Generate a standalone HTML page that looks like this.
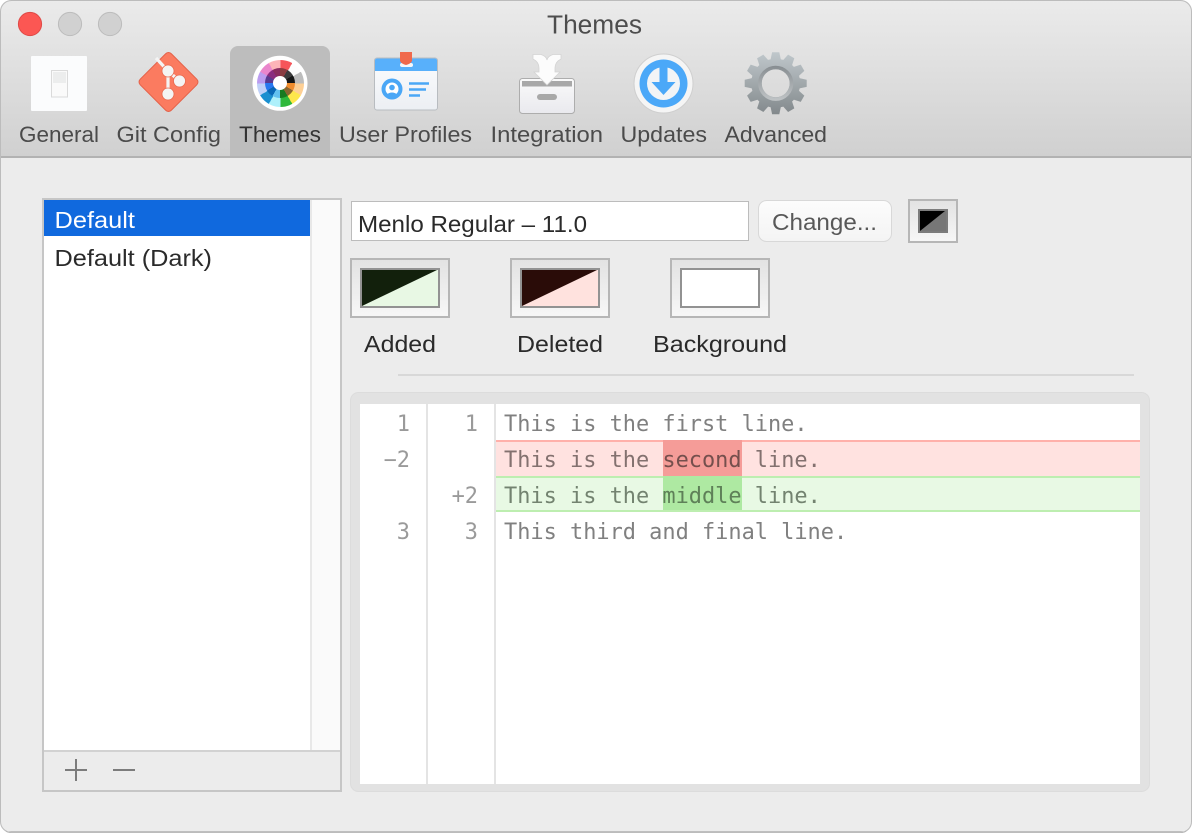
<!DOCTYPE html>
<html>
<head>
<meta charset="utf-8">
<title>Themes</title>
<style>
html,body{margin:0;padding:0;background:#fff;width:1192px;height:834px;overflow:hidden}
svg{position:absolute;left:0;top:0;display:block}
text{font-family:"Liberation Sans",sans-serif;white-space:pre}
.tb{font-size:22.5px;fill:#4b4b4b}
.ui{font-size:23.5px;fill:#2a2a2a}
.m{font-family:"DejaVu Sans Mono","Liberation Mono",monospace;font-size:21.93px;fill:#808080}
.n{font-family:"DejaVu Sans Mono","Liberation Mono",monospace;font-size:21.93px;fill:#9a9a9a;text-anchor:end}
#wheel{position:absolute;left:256.5px;top:59.8px;width:47px;height:47px;border-radius:50%;filter:blur(.35px);
background:conic-gradient(#f5555a 0 30deg,#fdfdfd 30deg 60deg,#bcbcbc 60deg 90deg,#fdcf94 90deg 120deg,#fde74c 120deg 150deg,#2fb83c 150deg 180deg,#aef0fb 180deg 210deg,#1b8fd0 210deg 240deg,#bfd0f8 240deg 270deg,#bb9cf0 270deg 300deg,#ea86cc 300deg 330deg,#fdb4b8 330deg 360deg)}
#wheel2{position:absolute;left:265px;top:68.3px;width:30px;height:30px;border-radius:50%;filter:blur(.35px);
background:conic-gradient(#8a3c40 0 30deg,#3b3b3b 30deg 60deg,#161616 60deg 90deg,#f08c2c 90deg 120deg,#8a6630 120deg 150deg,#177a20 150deg 180deg,#62c0f0 180deg 210deg,#0a68b8 210deg 240deg,#2878f0 240deg 270deg,#5a3a90 270deg 300deg,#8a2c80 300deg 330deg,#8a2c60 330deg 360deg)}
#wheel3{position:absolute;left:273px;top:76.3px;width:14px;height:14px;border-radius:50%;background:#fff}
</style>
</head>
<body>
<svg width="1192" height="834" viewBox="0 0 1192 834" xmlns="http://www.w3.org/2000/svg">
<defs>
<linearGradient id="tg" x1="0" y1="0" x2="0" y2="1"><stop offset="0" stop-color="#ebebeb"/><stop offset="1" stop-color="#d0d0d0"/></linearGradient>
<linearGradient id="sw" x1="0" y1="0" x2="0" y2="1"><stop offset="0" stop-color="#e2e2e2"/><stop offset="1" stop-color="#f7f7f7"/></linearGradient>
<linearGradient id="btn" x1="0" y1="0" x2="0" y2="1"><stop offset="0" stop-color="#fcfcfc"/><stop offset="1" stop-color="#f4f4f4"/></linearGradient>
<linearGradient id="gear" gradientUnits="userSpaceOnUse" x1="0" y1="52" x2="0" y2="115"><stop offset="0" stop-color="#c0c8cc"/><stop offset="1" stop-color="#82888b"/></linearGradient>
<linearGradient id="gear2" gradientUnits="userSpaceOnUse" x1="0" y1="65" x2="0" y2="102"><stop offset="0" stop-color="#868c90"/><stop offset="1" stop-color="#c2c6c8"/></linearGradient>
<linearGradient id="box" x1="0" y1="0" x2="0" y2="1"><stop offset="0" stop-color="#fafafa"/><stop offset="1" stop-color="#e9e9ee"/></linearGradient>
<linearGradient id="card" x1="0" y1="0" x2="0" y2="1"><stop offset="0" stop-color="#fbfcfe"/><stop offset="1" stop-color="#eceff3"/></linearGradient>
<clipPath id="win"><rect x="0" y="0" width="1192" height="833" rx="11"/></clipPath>
<mask id="gm" maskUnits="userSpaceOnUse" x="735" y="45" width="85" height="80">
  <g transform="translate(775.700 83.300)" fill="#fff">
    <path id="t0" d="M-5.500 -22 L-3.600 -31 H3.600 L5.500 -22 V22 L3.600 31 H-3.600 L-5.500 22 Z"/>
    <path transform="rotate(30)" d="M-5.500 -22 L-3.600 -31 H3.600 L5.500 -22 V22 L3.600 31 H-3.600 L-5.500 22 Z"/>
    <path transform="rotate(60)" d="M-5.500 -22 L-3.600 -31 H3.600 L5.500 -22 V22 L3.600 31 H-3.600 L-5.500 22 Z"/>
    <path transform="rotate(90)" d="M-5.500 -22 L-3.600 -31 H3.600 L5.500 -22 V22 L3.600 31 H-3.600 L-5.500 22 Z"/>
    <path transform="rotate(120)" d="M-5.500 -22 L-3.600 -31 H3.600 L5.500 -22 V22 L3.600 31 H-3.600 L-5.500 22 Z"/>
    <path transform="rotate(150)" d="M-5.500 -22 L-3.600 -31 H3.600 L5.500 -22 V22 L3.600 31 H-3.600 L-5.500 22 Z"/>
    <circle r="24.500"/>
    <circle r="14" fill="#000"/>
  </g>
</mask>
</defs>

<g clip-path="url(#win)">
<rect width="1192" height="834" fill="#ececec"/>
<rect width="1192" height="157" fill="url(#tg)"/>
<rect x="230" y="46" width="100" height="112" rx="8" fill="#bdbdbd"/>
<rect x="230" y="60" width="100" height="98" fill="#bdbdbd"/>
<rect y="156" width="1192" height="2" fill="#b2b2b2"/>
<rect y="831.500" width="1192" height="2" fill="#929292"/>
</g>
<rect x="0.500" y="0.500" width="1191" height="832" rx="11" fill="none" stroke="#bcbcbc"/>

<!-- traffic lights -->
<circle cx="30" cy="24" r="11.600" fill="#fc5753" stroke="#df4a47"/>
<circle cx="70" cy="24" r="11.600" fill="#d1d1d1" stroke="#bcbcbc"/>
<circle cx="110" cy="24" r="11.600" fill="#d1d1d1" stroke="#bcbcbc"/>

<text x="547" y="33.500" font-size="25.500" fill="#4d4d4d" textLength="95" lengthAdjust="spacingAndGlyphs">Themes</text>

<!-- General -->
<rect x="31" y="56" width="56" height="55" rx="1" fill="#fbfcfd"/>
<rect x="51.500" y="70.500" width="16" height="26.500" fill="#fafafa" stroke="#dadada"/>
<rect x="53" y="72" width="13" height="11" fill="#eceded"/>

<!-- Git -->
<rect x="146.500" y="60" width="44" height="44" rx="4" transform="rotate(45 168.500 82)" fill="#fb7b60" stroke="#e4624a"/>
<path d="M156 58 L168 71 M168 71 V94 M168 71 L179.500 81" stroke="#f4f4f4" stroke-width="3.200" fill="none"/>
<circle cx="168" cy="71" r="6" fill="#f4f4f4" stroke="#e8684e" stroke-width=".8"/>
<circle cx="179.500" cy="81" r="6" fill="#f4f4f4" stroke="#e8684e" stroke-width=".8"/>
<circle cx="168" cy="94" r="6" fill="#f4f4f4" stroke="#e8684e" stroke-width=".8"/>

<!-- Themes wheel base -->
<circle cx="280" cy="83.300" r="27.500" fill="#fff"/>

<!-- User Profiles -->
<rect x="374.500" y="58" width="63" height="52" rx="2.500" fill="url(#card)" stroke="#b8bcc0" stroke-width="1"/>
<path d="M375 71 V60.500 a2 2 0 0 1 2-2 h58 a2 2 0 0 1 2 2 V71 Z" fill="#58b0fb"/>
<rect x="400" y="63" width="13" height="4" rx="2" fill="#f4f8fc"/>
<path d="M400 52 h12 v9 q-1.500 3 -6 4 q-4.500 -1 -6 -4 Z" fill="#f0694c"/>
<circle cx="392" cy="89" r="10.500" fill="#4aa7f6"/>
<circle cx="392" cy="89" r="6.500" fill="#fff"/>
<circle cx="392" cy="87.500" r="2.800" fill="#4aa7f6"/>
<path d="M386 95 q6-5 12 0 l-2 2 h-8 Z" fill="#4aa7f6"/>
<path d="M409 83.500 h20 M409 89.500 h17 M409 95.500 h11" stroke="#4aa7f6" stroke-width="2.500" fill="none"/>

<!-- Integration -->
<rect x="519.500" y="78.500" width="55" height="35" rx="3" fill="url(#box)" stroke="#adadad"/>
<rect x="522" y="81" width="50" height="5.500" fill="#a8a8a8"/>
<rect x="537" y="94" width="20" height="6" rx="3" fill="#a8a8a8"/>
<path d="M533 54.500 H541 Q546 56 547 60 Q548 56 553 54.500 H561 V59 Q555 62 555 68 V72 H560 L547 85 L534 72 H539 V68 Q539 62 533 59 Z" fill="#fcfcfc" stroke="#d4d4d4" stroke-width="0.800"/>

<!-- Updates -->
<circle cx="663.500" cy="83.500" r="29.500" fill="#f5f5f5" stroke="#cfcfcf" stroke-width="1"/>
<circle cx="663.500" cy="83.500" r="24" fill="#4ba8f8"/>
<circle cx="663.500" cy="83.500" r="16.500" fill="#f2f4f6"/>
<path d="M659.500 64 h8 v18 h8 l-12 13 -12-13 h8 Z" fill="#4ba8f8"/>

<!-- Advanced gear -->
<rect x="735" y="45" width="85" height="80" fill="url(#gear)" mask="url(#gm)"/>
<circle cx="775.700" cy="83.300" r="15.800" fill="none" stroke="url(#gear2)" stroke-width="3.600"/>

<!-- toolbar labels -->
<text class="tb" x="19" y="142" textLength="80" lengthAdjust="spacingAndGlyphs">General</text>
<text class="tb" x="116.500" y="142" textLength="104.500" lengthAdjust="spacingAndGlyphs">Git Config</text>
<text class="tb" x="239" y="142" textLength="82" lengthAdjust="spacingAndGlyphs" style="fill:#333">Themes</text>
<text class="tb" x="339" y="142" textLength="133" lengthAdjust="spacingAndGlyphs">User Profiles</text>
<text class="tb" x="490.500" y="142" textLength="112.500" lengthAdjust="spacingAndGlyphs">Integration</text>
<text class="tb" x="620.500" y="142" textLength="86.500" lengthAdjust="spacingAndGlyphs">Updates</text>
<text class="tb" x="724.500" y="142" textLength="102.500" lengthAdjust="spacingAndGlyphs">Advanced</text>

<!-- theme list -->
<rect x="43" y="199" width="298" height="592" fill="#fff" stroke="#c6c6c6" stroke-width="2"/>
<rect x="44" y="200" width="266" height="36" fill="#1069de"/>
<rect x="310" y="200" width="30" height="550" fill="#fafafa"/>
<rect x="310" y="200" width="2" height="550" fill="#e8e8e8"/>
<rect x="44" y="752" width="296" height="38" fill="#ececec"/>
<rect x="44" y="750" width="296" height="2" fill="#d2d2d2"/>
<text x="54.500" y="228" font-size="23.500" fill="#fff" textLength="80.500" lengthAdjust="spacingAndGlyphs">Default</text>
<text class="ui" x="54.500" y="266" textLength="157.500" lengthAdjust="spacingAndGlyphs">Default (Dark)</text>
<path d="M65 770 h22 M76 759 v22 M113 770 h22" stroke="#7c7c7c" stroke-width="2" fill="none"/>

<!-- font field -->
<rect x="351.500" y="201.500" width="397" height="39" fill="#fff" stroke="#bcbcbc"/>
<text class="ui" x="358" y="232" textLength="229" lengthAdjust="spacingAndGlyphs">Menlo Regular – 11.0</text>

<!-- change button -->
<rect x="758.500" y="200.500" width="133" height="41" rx="8" fill="url(#btn)" stroke="#d8d8d8"/>
<text x="772" y="230" font-size="23.500" fill="#585858" textLength="105" lengthAdjust="spacingAndGlyphs">Change...</text>

<!-- small swatch -->
<rect x="909" y="200" width="48" height="42" fill="url(#sw)" stroke="#b6b6b6" stroke-width="2"/>
<rect x="919" y="210" width="28" height="22" fill="#777" stroke="#7c7c7c" stroke-width="2"/>
<path d="M920 211 H945 L920 231 Z" fill="#000"/>

<!-- swatches -->
<rect x="351" y="259" width="98" height="58" fill="url(#sw)" stroke="#b6b6b6" stroke-width="2"/>
<rect x="361" y="269" width="78" height="38" fill="#e8f8e4" stroke="#929292" stroke-width="2"/>
<path d="M362 270 H437 L362 306 Z" fill="#12200c"/>

<rect x="511" y="259" width="98" height="58" fill="url(#sw)" stroke="#b6b6b6" stroke-width="2"/>
<rect x="521" y="269" width="78" height="38" fill="#ffe2de" stroke="#929292" stroke-width="2"/>
<path d="M522 270 H597 L522 306 Z" fill="#2a0c08"/>

<rect x="671" y="259" width="98" height="58" fill="url(#sw)" stroke="#b6b6b6" stroke-width="2"/>
<rect x="681" y="269" width="78" height="38" fill="#fff" stroke="#929292" stroke-width="2"/>

<text class="ui" x="364" y="352" textLength="72" lengthAdjust="spacingAndGlyphs">Added</text>
<text class="ui" x="517" y="352" textLength="86" lengthAdjust="spacingAndGlyphs">Deleted</text>
<text class="ui" x="653" y="352" textLength="134" lengthAdjust="spacingAndGlyphs">Background</text>

<rect x="398" y="374" width="736" height="2" fill="#d8d8d8"/>

<!-- diff panel -->
<rect x="350.500" y="392.500" width="799" height="399" rx="8" fill="#e2e2e2" stroke="#dcdcdc"/>
<rect x="360" y="404" width="780" height="380" fill="#fff"/>
<rect x="426" y="404" width="2" height="380" fill="#e4e4e4"/>
<rect x="494" y="404" width="2" height="380" fill="#e4e4e4"/>

<rect x="496" y="440" width="644" height="2" fill="#ffb0aa"/>
<rect x="496" y="442" width="644" height="34" fill="#ffe2e0"/>
<rect x="663" y="440" width="79" height="36" fill="#f59c98"/>
<rect x="496" y="476" width="644" height="2" fill="#bdeeb0"/>
<rect x="496" y="478" width="644" height="32" fill="#e8f9e4"/>
<rect x="663" y="476" width="79" height="34" fill="#aee9a2"/>
<rect x="496" y="510" width="644" height="2" fill="#bdeeb0"/>

<text class="n" x="410" y="431">1</text>
<text class="n" x="478" y="431">1</text>
<text class="n" x="410" y="467">−2</text>
<text class="n" x="478" y="503">+2</text>
<text class="n" x="410" y="539">3</text>
<text class="n" x="478" y="539">3</text>

<text class="m" x="504" y="431">This is the first line.</text>
<text class="m" x="504" y="467" style="fill:#83716f">This is the <tspan fill="#754f4d">second</tspan> line.</text>
<text class="m" x="504" y="503" style="fill:#738370">This is the <tspan fill="#5e8058">middle</tspan> line.</text>
<text class="m" x="504" y="539">This third and final line.</text>
</svg>
<div id="wheel"></div>
<div id="wheel2"></div>
<div id="wheel3"></div>
</body>
</html>
